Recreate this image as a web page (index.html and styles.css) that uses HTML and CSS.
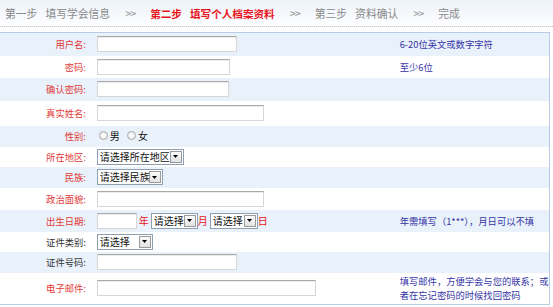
FILE: index.html
```html
<!DOCTYPE html>
<html lang="zh-CN">
<head>
  <meta charset="UTF-8">
  <title>填写个人档案资料</title>
  <link rel="stylesheet" href="styles.css">
</head>
<body>

  <div class="steps">
    <span class="num">第一步</span><span class="name">填写学会信息</span><span class="sep">&gt;&gt;</span>
    <span class="num current">第二步</span><span class="name current">填写个人档案资料</span><span class="sep">&gt;&gt;</span>
    <span class="num">第三步</span><span class="name">资料确认</span><span class="sep">&gt;&gt;</span>
    <span class="name">完成</span>
  </div>

  <form id="profileForm">
    <table class="form">
      <tr class="alt r23">
        <td class="label req">用户名:</td>
        <td class="field"><input type="text" class="w140"></td>
        <td class="note">6-20位英文或数字字符</td>
      </tr>
      <tr class="r22">
        <td class="label req">密码:</td>
        <td class="field"><input type="password" class="w133"></td>
        <td class="note">至少6位</td>
      </tr>
      <tr class="alt r23">
        <td class="label req">确认密码:</td>
        <td class="field"><input type="password" class="w132"></td>
        <td class="note"></td>
      </tr>
      <tr class="r25">
        <td class="label req">真实姓名:</td>
        <td class="field"><input type="text" class="w167"></td>
        <td class="note"></td>
      </tr>
      <tr class="alt r21">
        <td class="label req">性别:</td>
        <td class="field">
          <label class="radio"><input type="radio" name="sex">男</label>
          <label class="radio"><input type="radio" name="sex">女</label>
        </td>
        <td class="note"></td>
      </tr>
      <tr class="r20">
        <td class="label req">所在地区:</td>
        <td class="field">
          <span class="sel w87"><select><option>请选择所在地区</option></select><span class="arrow"><svg width="5" height="3" viewBox="0 0 5 3"><path d="M0 0h5L2.5 3z" fill="#000"/></svg></span></span>
        </td>
        <td class="note"></td>
      </tr>
      <tr class="alt r21">
        <td class="label req">民族:</td>
        <td class="field">
          <span class="sel w66"><select><option>请选择民族</option></select><span class="arrow"><svg width="5" height="3" viewBox="0 0 5 3"><path d="M0 0h5L2.5 3z" fill="#000"/></svg></span></span>
        </td>
        <td class="note"></td>
      </tr>
      <tr class="r22">
        <td class="label req">政治面貌:</td>
        <td class="field"><input type="text" class="w167"></td>
        <td class="note"></td>
      </tr>
      <tr class="alt r22">
        <td class="label req">出生日期:</td>
        <td class="field">
          <div class="birth">
            <input type="text" class="w40">
            <span class="unit first">年</span>
            <span class="sel w47"><select><option>请选择</option></select><span class="arrow"><svg width="5" height="3" viewBox="0 0 5 3"><path d="M0 0h5L2.5 3z" fill="#000"/></svg></span></span>
            <span class="unit">月</span>
            <span class="sel w48"><select><option>请选择</option></select><span class="arrow"><svg width="5" height="3" viewBox="0 0 5 3"><path d="M0 0h5L2.5 3z" fill="#000"/></svg></span></span>
            <span class="unit">日</span>
          </div>
        </td>
        <td class="note">年需填写（1***），月日可以不填</td>
      </tr>
      <tr class="r20">
        <td class="label">证件类别:</td>
        <td class="field">
          <span class="sel w56"><select><option>请选择</option></select><span class="arrow"><svg width="5" height="3" viewBox="0 0 5 3"><path d="M0 0h5L2.5 3z" fill="#000"/></svg></span></span>
        </td>
        <td class="note"></td>
      </tr>
      <tr class="alt r21">
        <td class="label">证件号码:</td>
        <td class="field"><input type="text" class="w140"></td>
        <td class="note"></td>
      </tr>
      <tr class="r32">
        <td class="label req">电子邮件:</td>
        <td class="field"><input type="text" class="w219"></td>
        <td class="note">填写邮件，方便学会与您的联系；或者在忘记密码的时候找回密码</td>
      </tr>
    </table>
  </form>

</body>
</html>
```

FILE: styles.css
```css
/* Reset styling */
* {
  margin: 0;
  padding: 0;
  box-sizing: border-box;
}

body {
  font-family: "Noto Sans CJK SC", "Liberation Sans", sans-serif;
  font-size: 9.3px;
  color: #333;
  background: #fff;
}

/* Step bar */
.steps {
  display: flex;
  align-items: center;
  height: 27px;
  padding-left: 5px;
  font-size: 10.8px;
  color: #8a8a8a;
  background: linear-gradient(#edf2f9, #fdfeff);
  border-bottom: 1px dotted #c4c4c4;
}

.steps .num {
  margin-right: 8px;
}

.steps .name {
  margin-right: 15px;
}

.steps .sep {
  margin-right: 15px;
  letter-spacing: -1px;
}

.steps .current {
  color: #e8141b;
  font-weight: bold;
  font-size: 10.6px;
}

/* Form table */
.form {
  width: 550px;
  margin-top: 5px;
  border-collapse: collapse;
  border-top: 1px solid #b9cde8;
  border-right: 1px solid #b9cde8;
  border-bottom: 1px solid #b9cde8;
}

.form tr {
  background: #fff;
}

.form tr.alt {
  background: #e9f1fb;
}

.r20 { height: 20px; }
.r21 { height: 21px; }
.r22 { height: 22px; }
.r23 { height: 23px; }
.r25 { height: 25px; }
.r32 { height: 32px; }

.form td {
  padding: 0;
  vertical-align: middle;
  line-height: 12px;
}

.label {
  width: 88px;
  text-align: right;
  padding-right: 2px !important;
  color: #333;
}

.label.req {
  color: #e23a36;
}

.field {
  width: 312px;
  padding-left: 9px !important;
}

.note {
  width: 150px;
  color: #3434a6;
  line-height: 14px !important;
}

/* Text inputs */
input[type="text"],
input[type="password"] {
  display: block;
  height: 16px;
  border: 1px solid #d6d6d6;
  border-top-color: #a9a9a9;
  box-shadow: inset 0 1px 0 #ececec;
  background: #fff;
  font-size: 10px;
}

.w40 { width: 40px; }
.w47 { width: 47px; }
.w48 { width: 48px; }
.w56 { width: 56px; }
.w66 { width: 66px; }
.w87 { width: 87px; }
.w132 { width: 132px; }
.w133 { width: 133px; }
.w140 { width: 140px; }
.w167 { width: 167px; }
.w219 { width: 219px; }

/* Drop-down boxes */
.sel {
  display: flex;
  align-items: center;
  height: 16px;
  border: 1px solid #8f9fb3;
  background: #fff;
}

.sel select {
  appearance: none;
  -webkit-appearance: none;
  flex: 1;
  min-width: 0;
  height: 14px;
  border: none;
  background: transparent;
  padding-left: 2px;
  font-family: "Noto Sans CJK SC", sans-serif;
  font-size: 10px;
  line-height: 14px;
  color: #111;
}

.sel .arrow {
  display: flex;
  align-items: center;
  justify-content: center;
  width: 12px;
  height: 12px;
  margin-right: 1px;
  border: 1px solid #9a9a9a;
  background: linear-gradient(#fbfbfb, #e2e2e2);
}

/* Birth date row */
.birth {
  display: flex;
  align-items: center;
}

.unit {
  color: #e8141b;
  font-size: 10px;
  margin: 0 1px 0 0;
}

.unit.first {
  margin-left: 2px;
}

.birth .unit + .sel {
  margin-left: 1px;
}

/* Radio buttons */
.radio {
  display: inline-flex;
  align-items: center;
  font-size: 10px;
  color: #111;
  margin-right: 3px;
}

.radio input {
  appearance: none;
  -webkit-appearance: none;
  width: 9px;
  height: 9px;
  margin: 0 2px 0 2px;
  border: 1px solid #a8a8a8;
  border-radius: 50%;
  background: radial-gradient(#fff, #e4e4e4);
}
```
